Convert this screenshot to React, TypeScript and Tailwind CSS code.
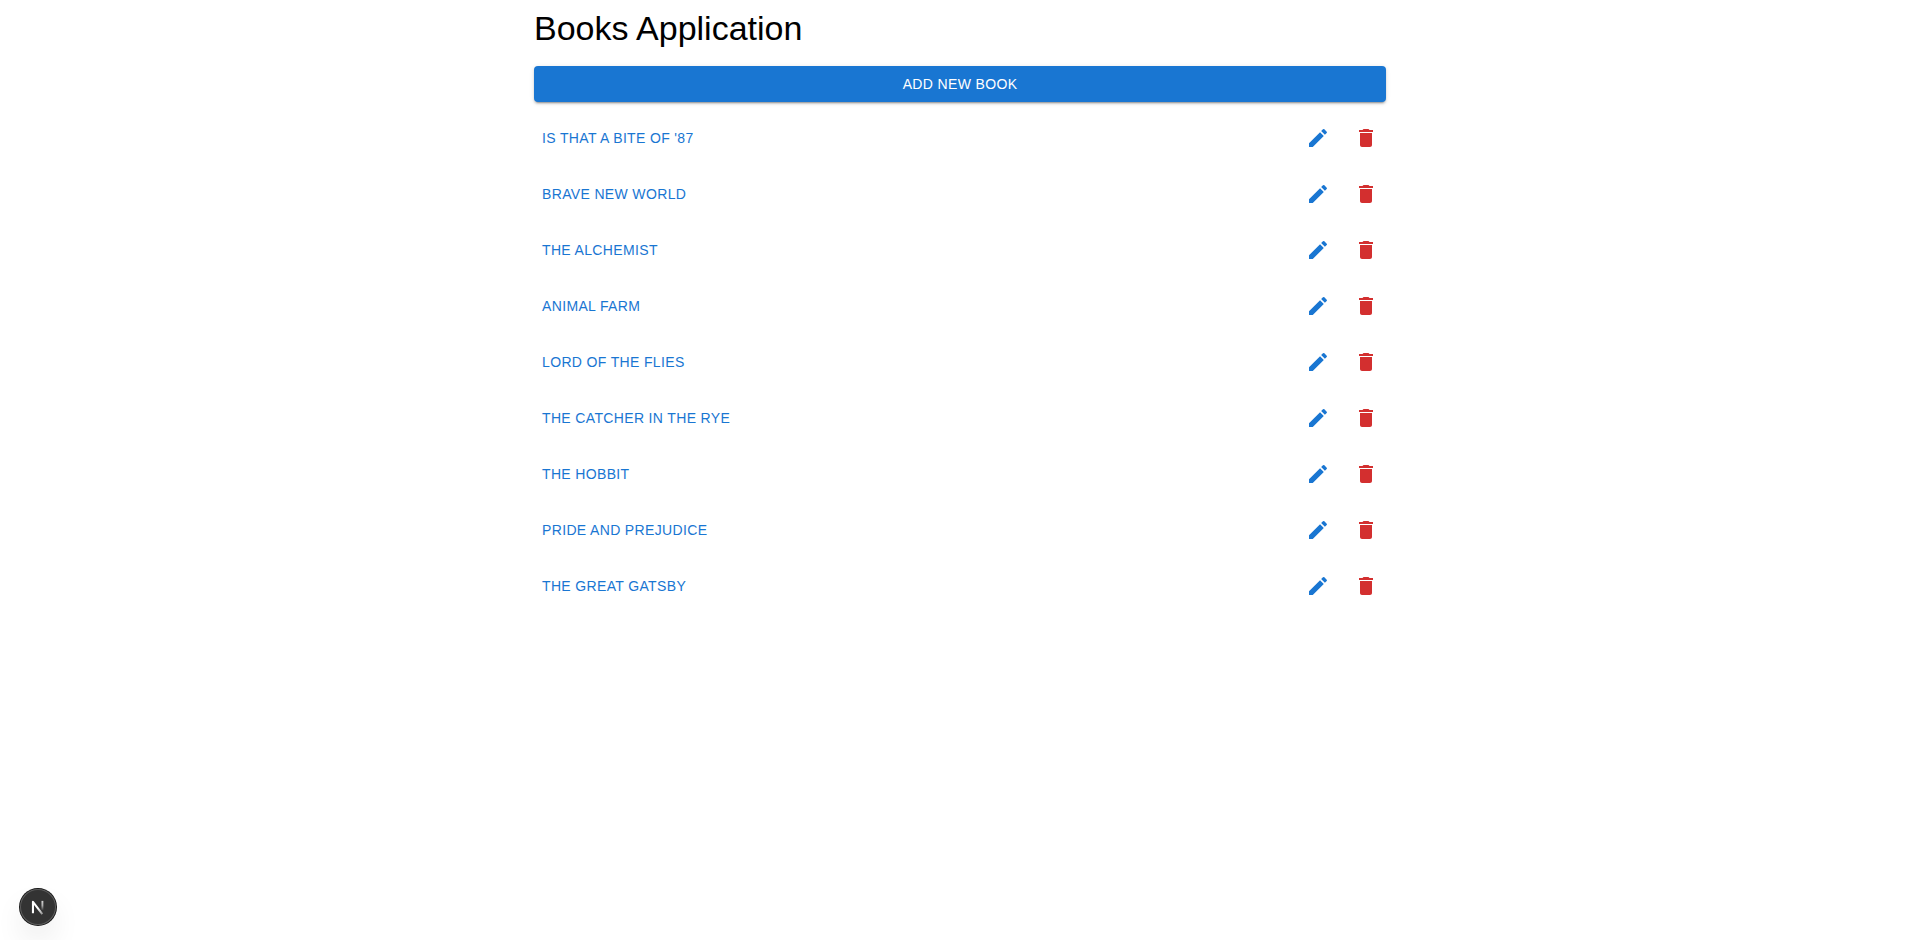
const books: string[] = [
  "Is that a bite of '87",
  "Brave New World",
  "The Alchemist",
  "Animal Farm",
  "Lord of the Flies",
  "The Catcher in the Rye",
  "The Hobbit",
  "Pride and Prejudice",
  "The Great Gatsby",
];

function EditIcon() {
  return (
    <svg viewBox="0 0 24 24" className="size-6 fill-current" aria-hidden="true">
      <path d="M3 17.25V21h3.75L17.81 9.94l-3.75-3.75zM20.71 7.04c.39-.39.39-1.02 0-1.41l-2.34-2.34a.9959.9959 0 0 0-1.41 0l-1.83 1.83 3.75 3.75z" />
    </svg>
  );
}

function DeleteIcon() {
  return (
    <svg viewBox="0 0 24 24" className="size-6 fill-current" aria-hidden="true">
      <path d="M6 19c0 1.1.9 2 2 2h8c1.1 0 2-.9 2-2V7H6zM19 4h-3.5l-1-1h-5l-1 1H5v2h14z" />
    </svg>
  );
}

function BookRow({ title }: { title: string }) {
  return (
    <li className="flex items-center justify-between py-2">
      <button
        type="button"
        className="rounded px-2 py-1.5 text-sm leading-6 tracking-wide text-[#1976d2] uppercase hover:bg-[#1976d2]/5"
      >
        {title}
      </button>
      <div className="flex gap-2">
        <button
          type="button"
          aria-label={`Edit ${title}`}
          className="rounded-full p-2 text-[#1976d2] hover:bg-[#1976d2]/5"
        >
          <EditIcon />
        </button>
        <button
          type="button"
          aria-label={`Delete ${title}`}
          className="rounded-full p-2 text-[#d32f2f] hover:bg-[#d32f2f]/5"
        >
          <DeleteIcon />
        </button>
      </div>
    </li>
  );
}

function DevToolsBadge() {
  return (
    <button
      type="button"
      aria-label="Open Next.js Dev Tools"
      className="fixed bottom-[15px] left-5 flex size-9 items-center justify-center rounded-full bg-[#333333] shadow-[0_0_0_1px_#171717,inset_0_0_0_1px_#5c5c5c,0_16px_32px_-8px_rgba(0,0,0,0.24)]"
    >
      <svg viewBox="0 0 40 40" className="size-9" fill="none" aria-hidden="true">
        <defs>
          <linearGradient id="stem" x1="0" y1="13" x2="0" y2="24" gradientUnits="userSpaceOnUse">
            <stop stopColor="white" stopOpacity="0.8" />
            <stop offset="0.5" stopColor="white" stopOpacity="0.6" />
            <stop offset="1" stopColor="white" stopOpacity="0" />
          </linearGradient>
          <linearGradient id="diagonal" x1="21" y1="21" x2="26" y2="28" gradientUnits="userSpaceOnUse">
            <stop stopColor="white" />
            <stop offset="1" stopColor="white" stopOpacity="0.4" />
          </linearGradient>
        </defs>
        <path d="M14.4 27V14.2L24.8 28" stroke="url(#diagonal)" strokeWidth="2.3" strokeLinejoin="round" />
        <path d="M24.9 13.2V24" stroke="url(#stem)" strokeWidth="2.1" />
      </svg>
    </button>
  );
}

export default function App() {
  return (
    <div className="min-h-screen bg-white pl-0.5 font-['Liberation_Sans',Arial,sans-serif] text-black">
      <main className="mx-auto max-w-[900px] px-6 pt-2">
        <h1 className="mb-4.5 text-[34px] leading-10">Books Application</h1>
        <button
          type="button"
          className="w-full rounded bg-[#1976d2] px-4 py-1.5 text-sm leading-6 tracking-wide text-white uppercase shadow-[0_3px_1px_-2px_rgba(0,0,0,0.2),0_2px_2px_0_rgba(0,0,0,0.14),0_1px_5px_0_rgba(0,0,0,0.12)] hover:bg-[#1565c0]"
        >
          Add new book
        </button>
        <ul className="mt-2">
          {books.map((title) => (
            <BookRow key={title} title={title} />
          ))}
        </ul>
      </main>
      <DevToolsBadge />
    </div>
  );
}
